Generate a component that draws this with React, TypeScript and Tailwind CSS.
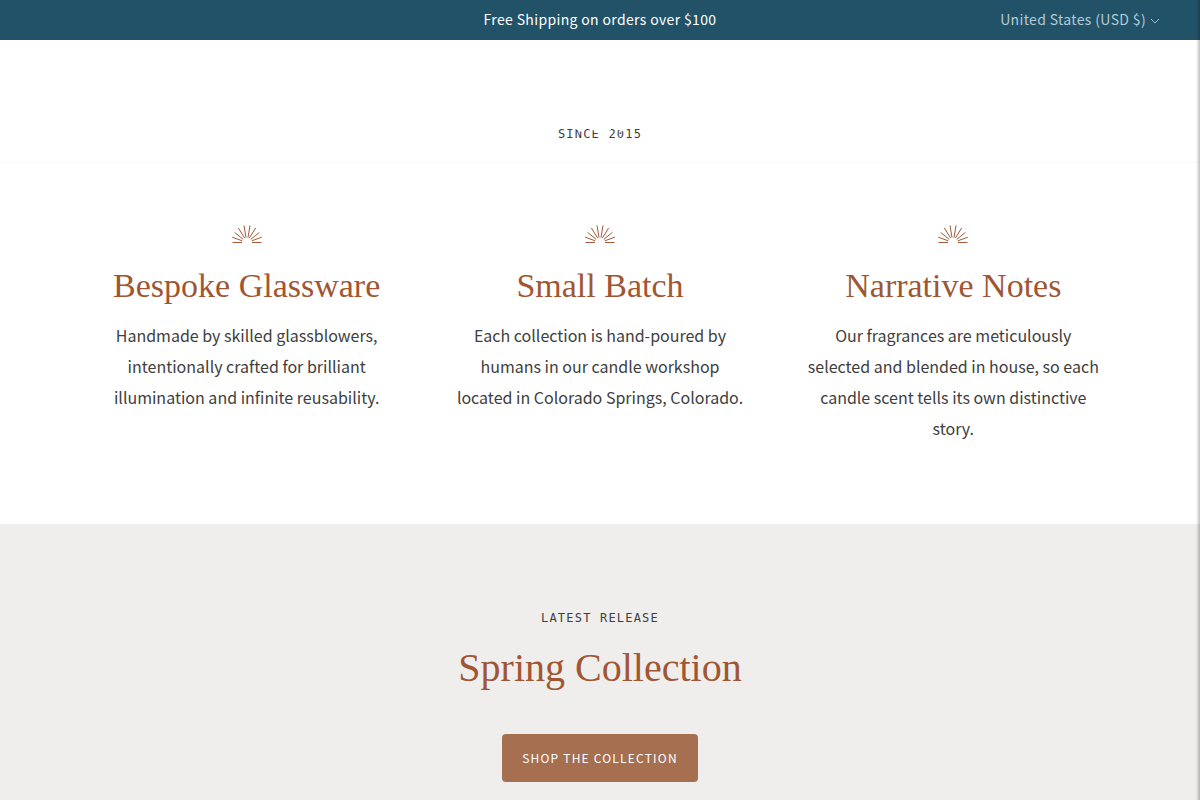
import { useState } from 'react';

const features = [
  {
    title: 'Bespoke Glassware',
    text: 'Handmade by skilled glassblowers, intentionally crafted for brilliant illumination and infinite reusability.',
  },
  {
    title: 'Small Batch',
    text: 'Each collection is hand-poured by humans in our candle workshop located in Colorado Springs, Colorado.',
  },
  {
    title: 'Narrative Notes',
    text: 'Our fragrances are meticulously selected and blended in house, so each candle scent tells its own distinctive story.',
  },
];

function SunIcon() {
  return (
    <svg className="mx-auto h-5 w-8" viewBox="0 0 32 20" fill="none" stroke="#a3593a" strokeWidth="1" aria-hidden="true">
      <path d="M1.5 18.5h9.5M30.5 18.5H21M1.2 13.2l10 3.6M30.8 13.2l-10 3.6M3.6 8.4l8.6 7M28.4 8.4l-8.6 7M7.4 4l6.2 10M24.6 4l-6.2 10M13 1.4l2 12.2M19 1.4l-2 12.2" />
    </svg>
  );
}

function AnnouncementBar() {
  const [open, setOpen] = useState(false);

  return (
    <div className="grid h-10 grid-cols-3 items-center bg-[#215268] px-10 pb-0.5 text-sm tracking-wide">
      <p className="col-start-2 text-center text-white">Free Shipping on orders over $100</p>
      <button
        type="button"
        aria-expanded={open}
        onClick={() => setOpen(!open)}
        className="flex items-center gap-1 justify-self-end tracking-wide text-[#b3cbd6]"
      >
        United States (USD $)
        <svg className="mt-1 h-2.5 w-2.5" viewBox="0 0 10 10" fill="none" stroke="currentColor" strokeWidth="0.9" aria-hidden="true">
          <path d="M1 3l4 4 4-4" />
        </svg>
      </button>
    </div>
  );
}

export default function App() {
  return (
    <div className="relative min-h-screen bg-[#f0eeec] font-['Noto_Sans_CJK_SC',sans-serif] text-[#3e3e3e]">
      <AnnouncementBar />

      <header className="relative border-b border-[#fafafa] bg-white pt-21 pb-[18px] text-center">
        <p className="font-['DejaVu_Sans_Mono',monospace] text-xs leading-5 tracking-widest">SINCE 2015</p>
        {/* White brushwork that runs over the tagline */}
        <svg className="absolute inset-x-0 top-20 mx-auto h-6 w-24" viewBox="0 0 96 24" fill="none" stroke="white" strokeWidth="2.5" aria-hidden="true">
          <path d="M22 7l8 4M38 9h11M54 8l5 1M66 8l5 2" />
        </svg>
      </header>

      {/* Features */}
      <section className="bg-white pt-[61px] pb-20">
        <div className="mx-auto grid max-w-[1060px] grid-cols-3 text-center">
          {features.map((feature) => (
            <div key={feature.title} className="px-7">
              <SunIcon />
              <h2 className="-mx-4 mt-5 font-['Liberation_Serif',serif] text-[34px] leading-11 text-[#a05633]">
                {feature.title}
              </h2>
              <p className="mt-3 text-base leading-[31px]">{feature.text}</p>
            </div>
          ))}
        </div>
      </section>

      {/* Latest release */}
      <section className="pt-[82px] pb-20 text-center">
        <p className="font-['DejaVu_Sans_Mono',monospace] text-xs leading-6 tracking-widest">LATEST RELEASE</p>
        <h2 className="mt-3 font-['Liberation_Serif',serif] text-[40px] leading-[52px] text-[#a05633]">Spring Collection</h2>
        <a
          href="#spring"
          className="mt-10 inline-block rounded bg-[#a66f50] px-5 text-xs leading-12 tracking-widest text-white"
        >
          SHOP THE COLLECTION
        </a>
      </section>

      {/* Shadow of the closed side drawer */}
      <div className="pointer-events-none absolute inset-y-0 right-0 w-1 bg-linear-to-r from-transparent to-black/25" />
    </div>
  );
}
